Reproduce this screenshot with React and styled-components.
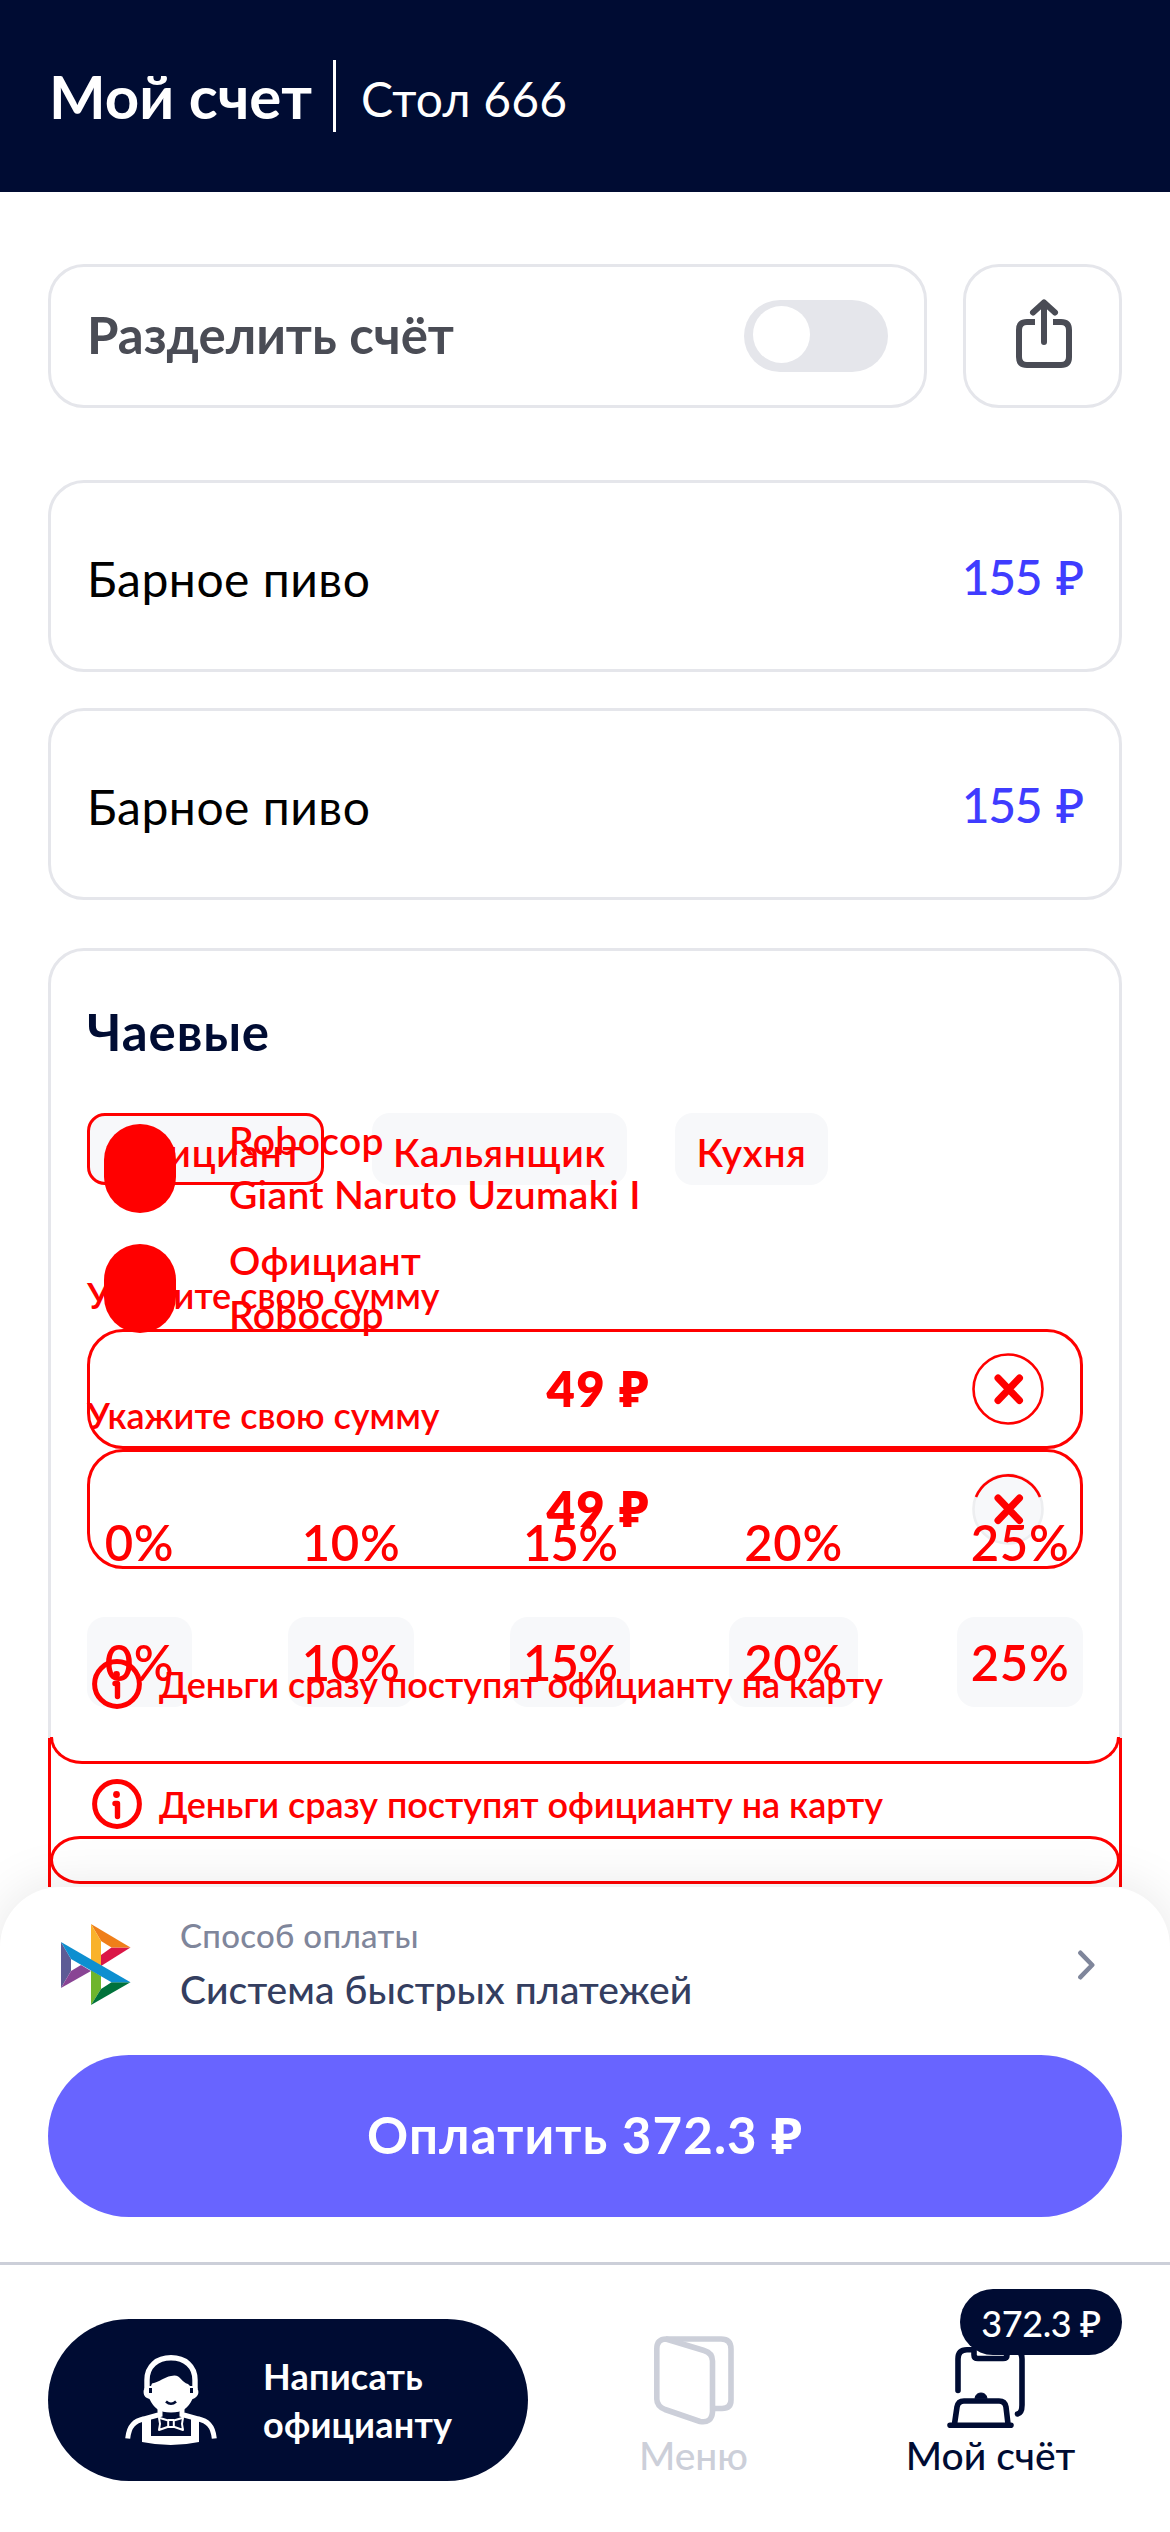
import React from 'react';
import styled, { createGlobalStyle } from 'styled-components';

const navy = '#000c33';
const red = '#ff0000';
const line = '#e5e6eb';
const soft = '#f7f8fa';
const graphite = '#4a4c55';

const GlobalStyle = createGlobalStyle`
  * { box-sizing: border-box; }
  body { margin: 0; background: #fff; }
  button { font: inherit; border: 0; background: none; padding: 0; color: inherit; }
  svg { display: block; flex: none; }
`;

const Screen = styled.div`
  width: 1170px;
  height: 2532px;
  overflow: hidden;
  display: flex;
  flex-direction: column;
  background: #fff;
  font-family: Lato, 'Noto Sans', sans-serif;
  white-space: nowrap;
`;

/* Header */
const Header = styled.header`
  flex: none;
  height: 192px;
  padding: 0 48px;
  display: flex;
  align-items: center;
  background: ${navy};
  color: #fff;
`;
const Title = styled.h1`
  margin: 0;
  width: 285px;
  padding-left: 1px;
  font-size: 60px;
  font-weight: 700;
  line-height: 74px;
`;
const Table = styled.div`
  height: 72px;
  padding: 4px 0 0 25px;
  border-left: 3px solid #fff;
  font-size: 48px;
  line-height: 70px;
  letter-spacing: 0.2px;
`;

/* Content */
const Content = styled.main`
  flex: none;
  height: 1695px;
  padding: 72px 48px 0;
  overflow: hidden;
  display: flex;
  flex-direction: column;
`;
const Card = styled.section`
  border: 3px solid ${line};
  border-radius: 36px;
  display: flex;
  align-items: center;
`;
const SplitRow = styled.div`
  display: flex;
  gap: 36px;
  margin-bottom: 72px;
`;
const SplitCard = styled(Card)`
  flex: 1;
  height: 144px;
  padding: 0 36px;
  justify-content: space-between;
`;
const SplitLabel = styled.span`
  padding-bottom: 3px;
  font-size: 51px;
  font-weight: 700;
  color: ${graphite};
`;
const Toggle = styled.span`
  width: 144px;
  height: 72px;
  padding: 6px 9px;
  border-radius: 36px;
  background: ${line};
`;
const Knob = styled.span`
  display: block;
  width: 57px;
  height: 57px;
  border-radius: 50%;
  background: #fff;
`;
const ShareCard = styled(Card)`
  width: 159px;
  height: 144px;
  padding: 0 0 5px 3px;
  justify-content: center;
`;
const Items = styled.div`
  display: flex;
  flex-direction: column;
  gap: 36px;
  margin-bottom: 48px;
`;
const ItemCard = styled(Card)`
  height: 192px;
  padding: 0 36px;
  justify-content: space-between;
`;
const ItemName = styled.span`
  padding-top: 4px;
  font-size: 48px;
  letter-spacing: 0.5px;
  color: #000;
`;
const Price = styled.span`
  font-size: 48px;
  font-weight: 500;
  letter-spacing: -1.3px;
  word-spacing: 4px;
  color: #3f3cff;
`;

/* Tips */
const TipsCard = styled.section`
  position: relative;
  flex: none;
  height: 1000px;
  padding: 45px 36px 0;
  border: 3px solid ${line};
  border-radius: 36px;
`;
const TipsTitle = styled.h2`
  margin: 0 0 45px;
  font-size: 51px;
  font-weight: 700;
  line-height: 72px;
  letter-spacing: 0.9px;
  color: ${navy};
`;
const Stack = styled.div`
  display: grid;
  color: ${red};
`;
const Layer = styled.div`
  grid-area: 1 / 1;
  align-self: start;
  margin-top: ${(p) => (p.$raised ? '-48px' : '0')};
`;
const Roles = styled.div`
  display: flex;
  gap: 48px;
`;
const Role = styled.button`
  width: ${(p) => p.$w}px;
  height: 72px;
  padding-top: 5px;
  border: ${(p) => (p.$active ? `3px solid ${red}` : '0')};
  border-radius: 18px;
  background: ${soft};
  font-size: 39px;
  font-weight: 600;
  letter-spacing: 0.7px;
  color: ${red};
`;
const Person = styled.div`
  display: flex;
  align-items: flex-start;
  gap: 53px;
  height: 207px;
  padding: 48px 0 0 17px;
`;
const Avatar = styled.span`
  width: 72px;
  height: 89px;
  margin-top: 11px;
  border-radius: 36px;
  background: ${red};
`;
const Names = styled.div`
  font-size: 39px;
  line-height: 54px;
  font-weight: 600;
  letter-spacing: 0.3px;
`;
const Label = styled.div`
  height: 57px;
  font-size: 36px;
  line-height: 46px;
  font-weight: 600;
`;
const Amount = styled.div`
  height: 120px;
  padding: 0 36px 0 135px;
  display: flex;
  align-items: center;
  border: 3px solid ${red};
  border-radius: 36px;
  font-size: 49px;
  font-weight: 800;
  letter-spacing: 1.4px;
`;
const AmountValue = styled.span`
  flex: 1;
  padding-bottom: 2px;
  text-align: center;
`;
const Percents = styled.div`
  margin-top: 48px;
  display: grid;
  grid-template-columns: 201px 222px 219px 228px 126px;
`;
const Percent = styled.button`
  width: ${(p) => p.$w}px;
  height: 90px;
  padding-bottom: 1px;
  border-radius: 18px;
  background: ${(p) => (p.$filled ? soft : 'transparent')};
  font-size: 49px;
  letter-spacing: ${(p) => (p.$tight ? '-0.8px' : '0.7px')};
  font-weight: 600;
  color: ${red};
`;
const Info = styled.div`
  margin-top: 71px;
  padding: 2px 0 0 5px;
  display: flex;
  align-items: center;
  gap: 17px;
  height: 50px;
  font-size: 36px;
  font-weight: 600;
  letter-spacing: -0.05px;
`;

/* Outlines that lie over the tips card */
const Arc = styled.span`
  position: absolute;
  left: -1px;
  right: -1px;
  top: 786px;
  height: 27px;
  border: 3px solid ${red};
  border-top: 0;
  border-radius: 0 0 32px 32px / 0 0 27px 27px;
`;
const Rails = styled.span`
  position: absolute;
  left: -3px;
  right: -3px;
  top: 787px;
  height: 160px;
  border: solid ${red};
  border-width: 0 3px;
`;
const Pill = styled.span`
  position: absolute;
  left: -1px;
  right: -1px;
  top: 885px;
  height: 48px;
  border: 3px solid ${red};
  border-radius: 30px / 24px;
`;

/* Payment sheet */
const Sheet = styled.section`
  position: relative;
  flex: none;
  height: 375px;
  padding: 22px 48px 0;
  border-radius: 60px 60px 0 0;
  background: #fff;
  box-shadow: 0 0 54px rgba(0, 0, 0, 0.1);
`;
const Method = styled.div`
  display: flex;
  align-items: center;
  height: 108px;
  padding: 3px 27px 0 13px;
  margin-bottom: 38px;
`;
const MethodText = styled.div`
  flex: 1;
  padding: 0 0 5px 49px;
  line-height: 54px;
`;
const MethodHint = styled.div`
  font-size: 33px;
  font-weight: 500;
  letter-spacing: 0.3px;
  color: #7f869b;
`;
const MethodName = styled.div`
  font-size: 39px;
  font-weight: 500;
  letter-spacing: 0.1px;
  color: #343e60;
`;
const PayButton = styled.button`
  width: 100%;
  height: 162px;
  padding-bottom: 4px;
  border-radius: 81px;
  background: #6864ff;
  color: #fff;
  font-size: 51px;
  font-weight: 700;
  letter-spacing: 1.1px;
`;

/* Bottom navigation */
const Nav = styled.nav`
  position: relative;
  flex: none;
  height: 270px;
  padding: 54px 31px 0 48px;
  display: flex;
  border-top: 3px solid #cccfd9;
  background: #fff;
`;
const CallButton = styled.button`
  width: 480px;
  height: 162px;
  margin-right: 17px;
  padding: 0 0 0 77px;
  display: flex;
  align-items: center;
  gap: 46px;
  border-radius: 81px;
  background: ${navy};
  color: #fff;
  text-align: left;
  font-size: 36px;
  font-weight: 700;
  line-height: 48px;
  letter-spacing: 0.2px;
`;
const NavItem = styled.div`
  position: relative;
  flex: 1;
  display: flex;
  flex-direction: column;
  align-items: center;
  color: ${(p) => (p.$active ? navy : '#cccfd9')};
  font-size: 39px;
  font-weight: 500;
  line-height: 48px;
`;
const IconSlot = styled.div`
  height: ${(p) => (p.$low ? 109 : 106)}px;
  margin-bottom: ${(p) => (p.$low ? 3 : 6)}px;
  padding-right: ${(p) => (p.$low ? 9 : 0)}px;
  display: flex;
  align-items: flex-end;
`;
const Badge = styled.span`
  position: absolute;
  right: 17px;
  top: -30px;
  width: 162px;
  height: 66px;
  padding-top: 4px;
  border-radius: 33px;
  background: ${navy};
  color: #fff;
  font-size: 36px;
  line-height: 60px;
  text-align: center;
  letter-spacing: -0.4px;
`;

const ShareIcon = () => (
  <svg width="56" height="70" viewBox="0 0 56 70" fill="none" stroke={graphite} strokeWidth="6">
    <path d="M19 23H11Q3 23 3 31V58Q3 66 11 66H45Q53 66 53 58V31Q53 23 45 23H37" />
    <path d="M28 43V4M17 13.5L28 3.5L39 13.5" strokeLinecap="round" strokeLinejoin="round" />
  </svg>
);

const ClearIcon = ({ muted }) => (
  <svg width="72" height="72" viewBox="0 0 72 72" fill="none">
    <circle cx="36" cy="36" r="34.5" fill={muted ? soft : '#fff'} stroke={muted ? '#edeef0' : red} strokeWidth="2.6" />
    {muted && <path d="M4 24A34.5 34.5 0 0 1 68 24" stroke={red} strokeWidth="2.6" />}
    <path d="M26 25L47.500 47.500M47.500 25L26 47.500" stroke={red} strokeWidth="7" strokeLinecap="round" />
  </svg>
);

const InfoIcon = () => (
  <svg width="50" height="50" viewBox="0 0 50 50" fill="none" stroke={red} strokeLinecap="round">
    <circle cx="25" cy="25" r="22.4" strokeWidth="5" />
    <circle cx="24.5" cy="15.5" r="3.4" fill={red} stroke="none" />
    <path d="M23 24.5H25.5V37.5" strokeWidth="5.4" strokeLinejoin="round" />
  </svg>
);

const SbpLogo = () => (
  <svg width="70" height="81" viewBox="0 0 70 81">
    <path fill="#5d5b95" d="M0 18L10 35V47L0 64Z" />
    <path fill="#894494" d="M0 64L10 47L20 41L30 47Z" />
    <path fill="#db1646" d="M69.5 23.5H50.5L40 31V42Z" />
    <path fill="#ef7e19" d="M30 0L69.5 23.5H50.5L40 17Z" />
    <path fill="#f9b22b" d="M30 0L40 17V42L30 36Z" />
    <path fill="#6fb52c" d="M30 81V46L40 52V65Z" />
    <path fill="#00723b" d="M30 81L40 65L50.5 58.3H69.5Z" />
    <path fill="#0d8fd0" d="M0 18L69.5 58.3H50.5L10 35Z" />
  </svg>
);

const Chevron = () => (
  <svg width="17" height="30" viewBox="0 0 17 30" fill="none" stroke="#7f869b" strokeWidth="4.6" strokeLinecap="round" strokeLinejoin="round">
    <path d="M2.4 2.8L14.2 15L2.4 27.2" />
  </svg>
);

const WaiterIcon = () => (
  <svg width="92" height="91" viewBox="0 0 92 91" fill="none">
    <g stroke="#fff">
      <path d="M22 34V25C22 11 32 2.8 46 2.8S70 11 70 25V34" strokeWidth="5.4" />
      <path d="M2.7 83.5C4 70 10 66 19 63.8L35 59.5V53M89.3 83.5C88 70 82 66 73 63.8L57 59.5V53" strokeWidth="5" />
      <path d="M43.2 65.5L34 62.8L35 68.8L34 75L43.2 71.8M48.8 65.5L58 62.8L57 68.8L58 75L48.8 71.8M43.2 65H48.8V72H43.2Z" strokeWidth="2" strokeLinejoin="round" />
    </g>
    <path fill="#fff" d="M27 28.5C35 27 39 22 46 21C55 18 56 27 63 29L65 31C71 31 73.4 33 73.4 37C73.4 41 70 43.5 67.5 44C63 53 58 57.5 46 57.5C34 57.5 29 53 24.5 44C21 43 18.6 41 18.6 37C18.6 33 21 31 26 31Z" />
    <path fill="#fff" d="M17 64L26 62V81H66V62L74 64V87Q46 93 17 87Z" />
    <path stroke={navy} strokeWidth="3" d="M25.5 33V38M66.5 33V38" />
    <path stroke={navy} strokeWidth="2.6" d="M41 46.5Q46 51 51 46.5" />
  </svg>
);

const MenuIcon = () => (
  <svg width="80" height="89" viewBox="0 0 80 89" fill="none" stroke="currentColor" strokeWidth="5.6" strokeLinejoin="round">
    <path d="M12 3H67Q77 3 77 13V64Q77 72.5 68 72.5H59" />
    <path d="M12 3L50 14.5Q58.5 17 58.5 25V76Q57.5 87.5 46 85.5L11 73.5Q2.8 70 2.8 63V13Q2.8 3 12 3Z" />
  </svg>
);

const BillIcon = () => (
  <svg width="78" height="81" viewBox="0 0 78 81" fill="none" stroke="currentColor" strokeWidth="5.6" strokeLinecap="round" strokeLinejoin="round">
    <path d="M11 43.5V12Q11 2.8 20 2.8H27V8Q27 11.5 31 11.5H56Q60 11.5 60 8V3H66Q75 3 75 12V58Q75 66 70.5 67" />
    <path d="M7.5 77L10 60Q11 54 17 54H52Q58 54 59 60L61 77M3 78.3H64" />
    <path d="M28 51Q29 46 34 46T40 51Z" fill="currentColor" strokeWidth="1" />
  </svg>
);

const PERCENTS = [['0%', 105], ['10%', 126], ['15%', 120], ['20%', 129], ['25%', 126]];

function TipForm({ names, filled }) {
  return (
    <>
      <Person>
        <Avatar />
        <Names>
          {names.map((n) => <div key={n}>{n}</div>)}
        </Names>
      </Person>
      <Label>Укажите свою сумму</Label>
      <Amount>
        <AmountValue>49 ₽</AmountValue>
        <ClearIcon muted={filled} />
      </Amount>
      <Percents>
        {PERCENTS.map(([text, w]) => (
          <Percent key={text} $w={w} $filled={filled} $tight={text === '15%'}>{text}</Percent>
        ))}
      </Percents>
      <Info>
        <InfoIcon />
        <span>Деньги сразу поступят официанту на карту</span>
      </Info>
    </>
  );
}

export default function App() {
  return (
    <Screen>
      <GlobalStyle />
      <Header>
        <Title>Мой счет</Title>
        <Table>Стол 666</Table>
      </Header>
      <Content>
        <SplitRow>
          <SplitCard>
            <SplitLabel>Разделить счёт</SplitLabel>
            <Toggle><Knob /></Toggle>
          </SplitCard>
          <ShareCard><ShareIcon /></ShareCard>
        </SplitRow>
        <Items>
          {[1, 2].map((id) => (
            <ItemCard key={id}>
              <ItemName>Барное пиво</ItemName>
              <Price>155 ₽</Price>
            </ItemCard>
          ))}
        </Items>
        <TipsCard>
          <TipsTitle>Чаевые</TipsTitle>
          <Stack>
            <Layer>
              <Roles>
                <Role $w={237} $active>Официант</Role>
                <Role $w={255}>Кальянщик</Role>
                <Role $w={153}>Кухня</Role>
              </Roles>
              <TipForm names={['Официант', 'Robocop']} filled />
            </Layer>
            <Layer $raised>
              <TipForm names={['Robocop', 'Giant Naruto Uzumaki I']} />
            </Layer>
          </Stack>
          <Arc />
          <Rails />
          <Pill />
        </TipsCard>
      </Content>
      <Sheet>
        <Method>
          <SbpLogo />
          <MethodText>
            <MethodHint>Способ оплаты</MethodHint>
            <MethodName>Система быстрых платежей</MethodName>
          </MethodText>
          <Chevron />
        </Method>
        <PayButton>Оплатить 372.3 ₽</PayButton>
      </Sheet>
      <Nav>
        <CallButton>
          <WaiterIcon />
          <span>Написать<br />официанту</span>
        </CallButton>
        <NavItem>
          <IconSlot><MenuIcon /></IconSlot>
          Меню
        </NavItem>
        <NavItem $active>
          <IconSlot $low><BillIcon /></IconSlot>
          Мой счёт
          <Badge>372.3 ₽</Badge>
        </NavItem>
      </Nav>
    </Screen>
  );
}
